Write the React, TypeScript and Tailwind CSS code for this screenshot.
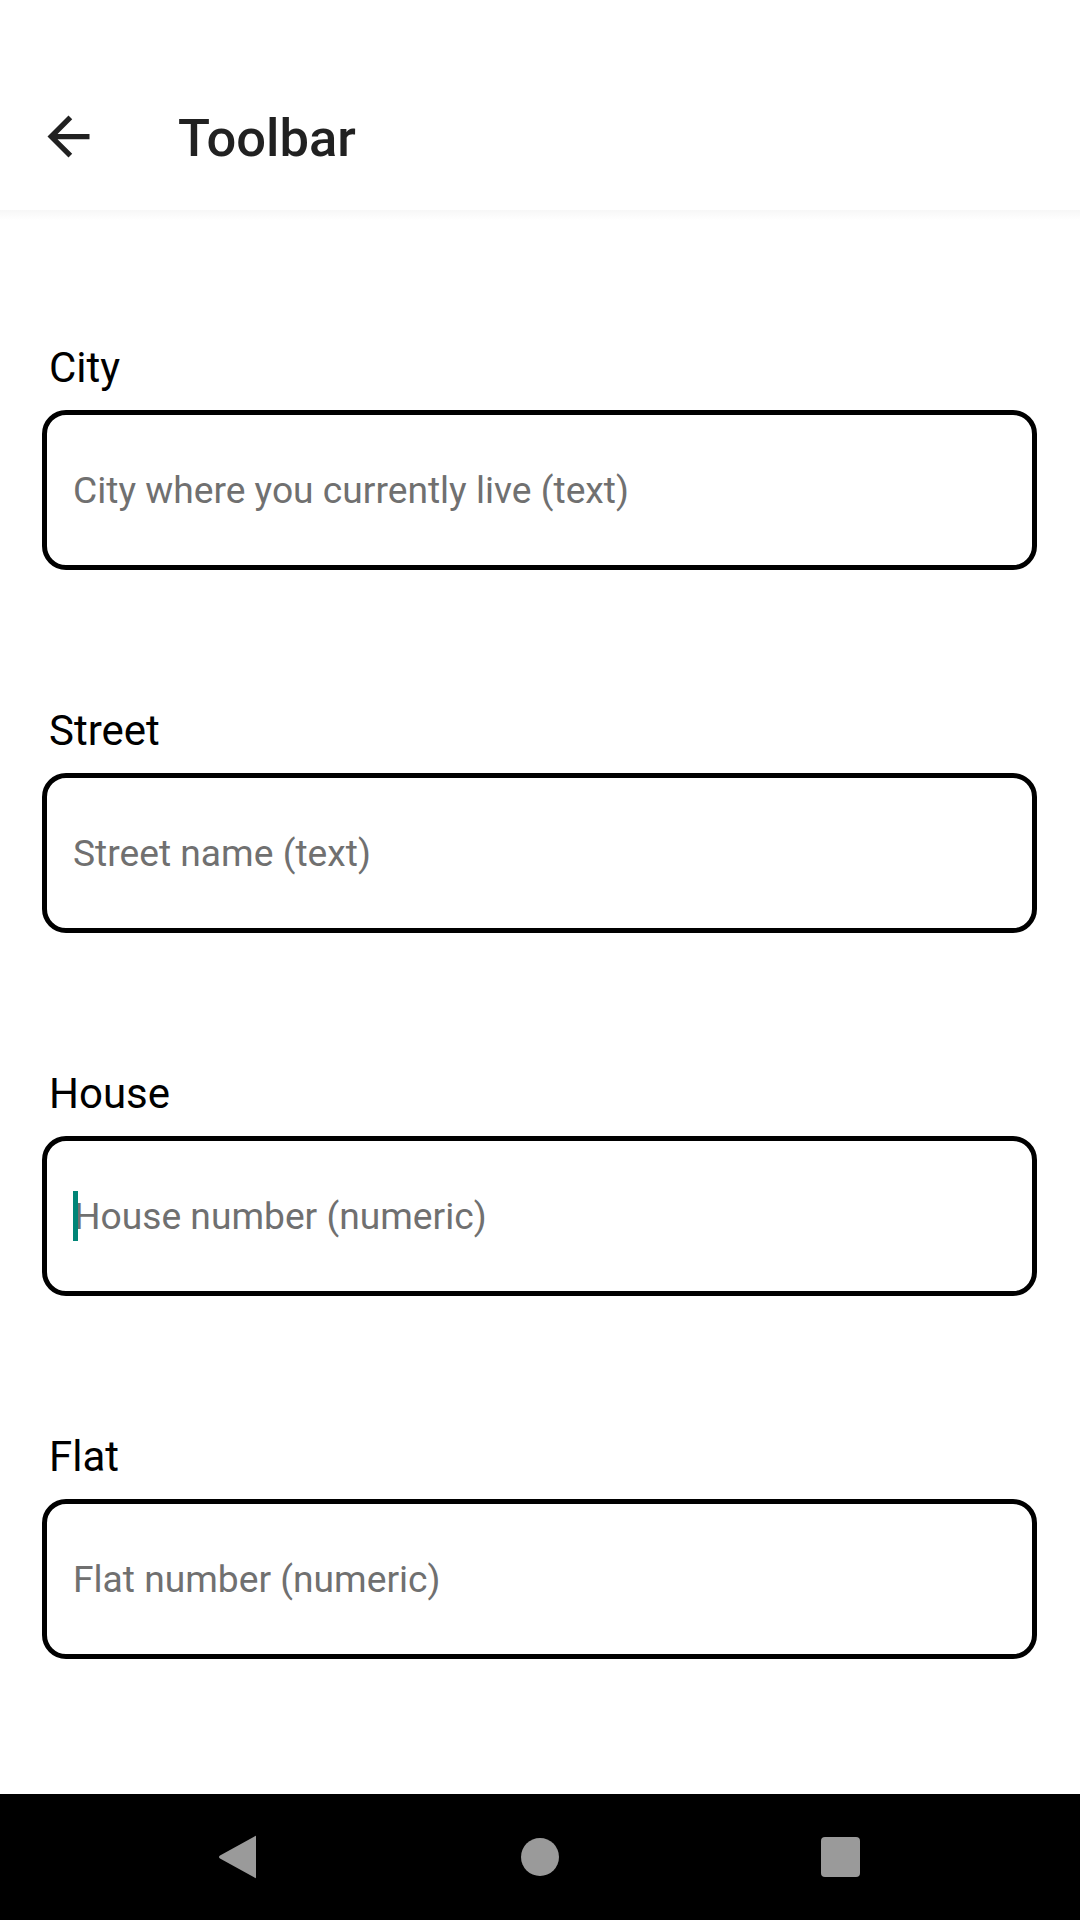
import React from 'react';

interface FieldProps {
  label: string;
  placeholder: string;
  focused?: boolean;
}

const Field: React.FC<FieldProps> = ({ label, placeholder, focused = false }) => (
  <div className="flex flex-col">
    <label className="pl-[49px] text-[42px] leading-[49px] text-black">{label}</label>
    <div className="ml-[42px] mr-[43px] mt-[18px] h-[160px] flex items-center rounded-[24px] border-[5px] border-black pl-[26px]">
      {focused && <span className="w-[5px] h-[50px] bg-[#008577] -mr-[4px] relative z-10"></span>}
      <span className="text-[37.2px] leading-[43px] text-[#707070]">{placeholder}</span>
    </div>
  </div>
);

export default function App() {
  return (
    <div className="w-[1080px] h-[1920px] bg-white flex flex-col font-['Roboto',sans-serif] overflow-hidden">
      {/* Toolbar (status bar area + app bar) */}
      <header className="h-[210px] pt-[63px] bg-white flex items-center relative z-10">
        <div className="flex items-center h-[147px] w-full">
          <svg className="ml-[37px] w-[63px] h-[63px] text-[#212121]" viewBox="0 0 24 24" fill="currentColor">
            <path d="M20 11H7.83l5.59-5.59L12 4l-8 8 8 8 1.41-1.41L7.83 13H20v-2z" />
          </svg>
          <h1 className="ml-[78px] mt-[4px] text-[52.5px] font-medium text-[#212121] leading-none">Toolbar</h1>
        </div>
      </header>
      <div className="h-[10px] bg-gradient-to-b from-[#f7f7f7] to-white"></div>

      {/* Form */}
      <main className="flex-1 flex flex-col gap-[136px] pt-[123px]">
        <Field label="City" placeholder="City where you currently live (text)" />
        <Field label="Street" placeholder="Street name (text)" />
        <Field label="House" placeholder="House number (numeric)" focused />
        <Field label="Flat" placeholder="Flat number (numeric)" />
      </main>

      {/* Navigation bar */}
      <nav className="h-[126px] bg-black flex items-center justify-center">
        <div className="w-[300px] flex justify-center pr-[4px]">
          <svg width="40" height="44" viewBox="0 0 40 44">
            <path d="M38 2 L38 42 Q38 44 36.5 42.5 L2 23.5 Q0 22 2 20.5 L36.5 1.5 Q38 0 38 2 Z" fill="#9a9a9a" />
          </svg>
        </div>
        <div className="w-[300px] flex justify-center">
          <div className="w-[38px] h-[38px] rounded-full bg-[#9a9a9a]"></div>
        </div>
        <div className="w-[300px] flex justify-center">
          <div className="w-[39px] h-[40px] rounded-[4px] bg-[#9a9a9a]"></div>
        </div>
      </nav>
    </div>
  );
}
